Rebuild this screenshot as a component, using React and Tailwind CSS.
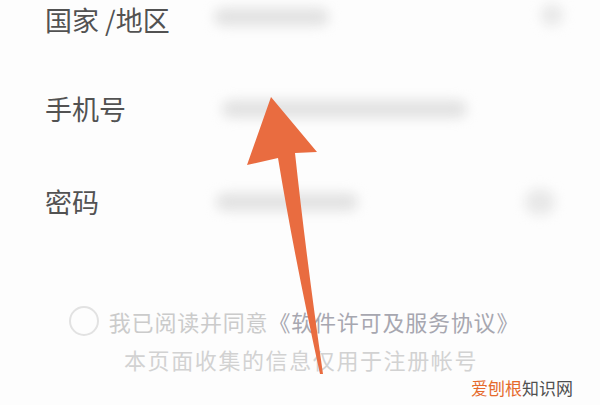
const font = { fontFamily: '"Noto Sans CJK SC", "Noto Sans", sans-serif' }

const rows = [
  {
    label: '国家 /地区',
    row: 'h-[62px] items-start',
    labelPad: 'pt-[6px]',
    value: 'w-[115px] ml-[34px] mt-[8px]',
    dot: 'w-[22px] h-[22px] ml-auto mr-[37px] mt-[4px]',
  },
  { label: '手机号', row: 'h-[93px] items-center', labelPad: '', value: 'w-[245px] ml-[42px]', dot: '' },
  {
    label: '密码',
    row: 'h-[93px] items-center',
    labelPad: '',
    value: 'w-[142px] ml-[36px]',
    dot: 'w-[30px] h-[26px] ml-auto mr-[45px]',
  },
]

function Arrow() {
  return (
    <svg className="absolute left-0 top-0 pointer-events-none" width="600" height="405" viewBox="0 0 600 405">
      <path
        d="M271 97 L317 152 L295 153 Q306 255 323 374 L320 374 Q294 255 278 158 L247 165 Z"
        fill="#e96c40"
      />
    </svg>
  )
}

export default function App() {
  return (
    <div className="relative w-[600px] h-[405px] overflow-hidden bg-[#fdfdfd]" style={font}>
      <div>
        {rows.map((r, i) => (
          <div key={i} className={`flex ${r.row}`}>
            <div
              className={`pl-[45px] ${r.labelPad} w-[180px] shrink-0 whitespace-nowrap text-[27px] leading-none text-[#525252]`}
            >
              {r.label}
            </div>
            <div className={`${r.value} h-[18px] rounded-full bg-[#e2e2e2] blur-[6px]`} />
            {r.dot && <div className={`${r.dot} rounded-full bg-[#e8e8e8] blur-[6px]`} />}
          </div>
        ))}
      </div>

      <div className="mt-[58px] flex flex-col items-center">
        <div className="flex items-center pr-[12px]">
          <div className="w-[30px] h-[30px] rounded-full border-2 border-[#e2e2e2] mr-[10px]" />
          <span className="text-[22px] leading-[30px] tracking-[0.8px] text-[#cbcbcb]">
            我已阅读并同意<span className="text-[#a7a7b0]">《软件许可及服务协议》</span>
          </span>
        </div>
        <div className="mt-[8px] text-[22px] leading-[30px] tracking-[1.6px] text-[#d2d2d2] pl-[2px]">
          本页面收集的信息仅用于注册帐号
        </div>
      </div>

      <Arrow />

      <div className="absolute right-[27px] bottom-[9px] text-[17px] leading-none">
        <span className="text-[#e56a2c]">爱刨根</span>
        <span className="text-[#505050]">知识网</span>
      </div>
    </div>
  )
}
